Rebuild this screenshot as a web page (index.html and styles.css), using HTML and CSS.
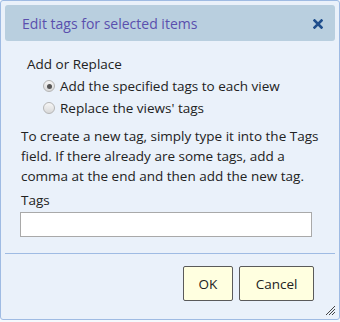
FILE: index.html
```
<!DOCTYPE html>
<html lang="en">
<head>
  <meta charset="UTF-8">
  <title>Edit tags</title>
  <link rel="stylesheet" href="styles.css">
</head>
<body>
  <div class="dialog">
    <div class="titlebar">
      <span class="title">Edit tags for selected items</span>
      <svg class="close" width="10" height="10" viewBox="0 0 10 10">
        <path d="M1.5 1.5 L8.5 8.5 M8.5 1.5 L1.5 8.5" stroke="#1f4e8c" stroke-width="2.6" stroke-linecap="square"/>
      </svg>
    </div>
    <div class="content">
      <div class="group_label">Add or Replace</div>
      <label class="radio"><span class="dot checked"></span>Add the specified tags to each view</label>
      <label class="radio"><span class="dot"></span>Replace the views' tags</label>
      <p class="hint">To create a new tag, simply type it into the Tags field. If there already are some tags, add a comma at the end and then add the new tag.</p>
      <div class="field_label">Tags</div>
      <div class="input"></div>
    </div>
    <div class="buttons">
      <button type="button" class="btn ok">OK</button>
      <button type="button" class="btn cancel">Cancel</button>
    </div>
    <svg class="grip" width="12" height="12" viewBox="0 0 12 12">
      <path d="M2 11 L11 2 M5 11 L11 5 M8 11 L11 8" stroke="#444" stroke-width="1"/>
    </svg>
  </div>
</body>
</html>
```
FILE: styles.css
```
*{
  margin: 0;
  padding: 0;
  box-sizing: border-box;
}
html{
  background-color: #f6f9fd;
}
body{
  width: 340px;
  height: 322px;
  font-family: "Open Sans", "Noto Sans", sans-serif;
  font-size: 13.5px;
  color: #222;
}
.dialog{
  width: 340px;
  height: 320px;
  border: 1px solid #9fbbe3;
  border-radius: 3px;
  background-color: #eaf1fa;
  padding: 4px;
  position: relative;
  display: flex;
  flex-direction: column;
}
.titlebar{
  height: 36px;
  background-color: #b9cfdf;
  border-radius: 3px;
  display: flex;
  align-items: center;
  justify-content: space-between;
  padding: 0 12px 0 17px;
}
.title{
  color: #5a4fae;
  font-size: 14px;
}
.close{
  display: block;
  margin-top: 1px;
}
.content{
  padding: 12px 6px 0 16px;
  height: 213px;
  border-bottom: 1px solid #9fbbe3;
}
.group_label{
  padding-left: 6px;
  line-height: 22px;
}
.radio{
  display: flex;
  align-items: center;
  padding-left: 22px;
  line-height: 22px;
}
.dot{
  width: 12px;
  height: 12px;
  border-radius: 50%;
  border: 1px solid #b5b5b5;
  background: linear-gradient(#f6f6f6, #d9d9d9);
  margin-right: 5px;
  position: relative;
}
.dot.checked::after{
  content: '';
  position: absolute;
  left: 2.5px;
  top: 2.5px;
  width: 5px;
  height: 5px;
  border-radius: 50%;
  background-color: #555;
}
.hint{
  margin-top: 7px;
  line-height: 20px;
}
.field_label{
  margin-top: 4px;
  line-height: 20px;
}
.input{
  width: 292px;
  height: 25px;
  background: #fff;
  border: 1px solid #a9a9a9;
  margin: 2px 0 0 -1px;
}
.buttons{
  display: flex;
  justify-content: flex-end;
  gap: 6px;
  padding: 12px 21px 0 0;
}
.btn{
  height: 35px;
  background-color: #ffffe0;
  border: 1px solid #5a5a5a;
  border-radius: 2px;
  font-family: inherit;
  font-size: 13.5px;
  color: #222;
}
.ok{
  width: 50px;
}
.cancel{
  width: 75px;
}
.grip{
  position: absolute;
  right: 3px;
  bottom: 3px;
}
```
